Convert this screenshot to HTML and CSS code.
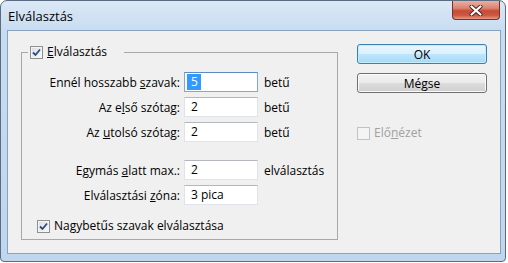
FILE: index.html
```html
<!DOCTYPE html>
<html lang="hu">
<head>
  <meta charset="UTF-8" />
  <title>Elválasztás</title>
  <link rel="stylesheet" href="styles.css">
</head>
<body>
  <div class="window">
    <div class="titlebar">
      <span class="title">Elválasztás</span>
      <span class="close">
        <svg width="14" height="11" viewBox="0 0 14 11">
          <path d="M2.5 1.5 L11.5 9.5 M11.5 1.5 L2.5 9.5" stroke="#4a211c" stroke-width="4" stroke-linecap="round"/>
          <path d="M2.5 1.5 L11.5 9.5 M11.5 1.5 L2.5 9.5" stroke="#fff" stroke-width="2.2" stroke-linecap="round"/>
        </svg>
      </span>
    </div>

    <div class="client">
      <fieldset class="group">
        <legend class="option">
          <span class="check on"><svg width="9" height="9" viewBox="0 0 9 9"><path d="M1 4.5 L3.5 7 L8 1.5" fill="none" stroke="#2b4a86" stroke-width="1.8"/></svg></span>
          <span><u>E</u>lválasztás</span>
        </legend>

        <div class="rows">
          <span class="label">Ennél hosszabb <u>s</u>zavak:</span>
          <span class="field focus"><span class="value sel">5</span></span>
          <span class="unit">betű</span>

          <span class="label">Az e<u>l</u>ső szótag:</span>
          <span class="field"><span class="value">2</span></span>
          <span class="unit">betű</span>

          <span class="label">Az <u>u</u>tolsó szótag:</span>
          <span class="field"><span class="value">2</span></span>
          <span class="unit">betű</span>
        </div>

        <div class="rows second">
          <span class="label">Egymás <u>a</u>latt max.:</span>
          <span class="field"><span class="value">2</span></span>
          <span class="unit">elválasztás</span>

          <span class="label">Elválasztási <u>z</u>óna:</span>
          <span class="field"><span class="value">3 pica</span></span>
          <span class="unit"></span>
        </div>

        <div class="option caps">
          <span class="check on"><svg width="9" height="9" viewBox="0 0 9 9"><path d="M1 4.5 L3.5 7 L8 1.5" fill="none" stroke="#2b4a86" stroke-width="1.8"/></svg></span>
          <span>Na<u>g</u>ybetűs szavak elválasztása</span>
        </div>
      </fieldset>

      <div class="side">
        <button class="btn default">OK</button>
        <button class="btn">Mégse</button>
        <div class="option disabled">
          <span class="check"></span>
          <span>Elő<u>n</u>ézet</span>
        </div>
      </div>
    </div>
  </div>
</body>
</html>
```

FILE: styles.css
```css
body {
  margin: 0;
  background: #fff;
  font-family: 'Open Sans', sans-serif;
  font-size: 12px;
  color: #000;
}
.window {
  width: 506px;
  height: 262px;
  box-sizing: border-box;
  border: 1px solid #5b6c82;
  border-radius: 7px 7px 4px 4px;
  background: linear-gradient(#dbe8f6, #c8dcf1 30px, #c0d6ee);
  padding: 0 4px 7px 6px;
  display: flex;
  flex-direction: column;
}
.titlebar {
  height: 29px;
  display: flex;
  justify-content: space-between;
  padding-left: 1px;
}
.title {
  font-size: 13px;
  line-height: 30px;
}
.close {
  width: 48px;
  height: 19px;
  margin-right: 1px;
  box-sizing: border-box;
  border: 1px solid #7c3027;
  border-top: none;
  border-radius: 0 0 4px 4px;
  background: linear-gradient(#eab0a3, #d98472 40%, #c84a36 55%, #cc5a43 80%, #e59a83);
  display: flex;
  align-items: center;
  justify-content: center;
}
.client {
  flex: 1;
  background: #f0f0f0;
  border: 1px solid #8aa2c1;
  display: flex;
  align-items: flex-start;
  padding: 13px 0 0 13px;
}
.group {
  margin: 0;
  width: 317px;
  box-sizing: border-box;
  border: 1px solid #a8a8a8;
  padding: 0 0 5px 0;
  min-width: 0;
}
.group legend {
  margin-left: 6px;
  padding: 0 17px 0 2px;
}
.option {
  display: flex;
  align-items: center;
  gap: 4px;
  line-height: 16px;
}
.check {
  width: 13px;
  height: 13px;
  box-sizing: border-box;
  border: 1px solid #8f8f8f;
  background: linear-gradient(135deg, #dcdcdc, #fbfbfb);
  box-shadow: inset 0 0 0 1px #f4f4f4;
  display: flex;
  align-items: center;
  justify-content: center;
}
.rows {
  display: grid;
  grid-template-columns: 158px 74px auto;
  grid-auto-rows: 20px;
  column-gap: 4px;
  row-gap: 5px;
  align-items: center;
  margin-top: 12px;
}
.rows .unit {
  padding-left: 2px;
}
.rows.second {
  margin-top: 18px;
}
.label {
  text-align: right;
}
.field {
  height: 20px;
  box-sizing: border-box;
  background: #fff;
  border: 1px solid #e2e3ea;
  border-top-color: #b5b7be;
  padding: 1px 0 0 2px;
  line-height: 16px;
}
.field.focus {
  border-color: #7ea9d6;
  border-top-color: #5b8cc4;
}
.value {
  display: inline-block;
  padding: 0 3px 0 4px;
}
.value.sel {
  background: #3399ff;
  color: #fff;
}
.caps {
  margin: 13px 0 0 15px;
}
.side {
  margin-left: 19px;
  display: flex;
  flex-direction: column;
  width: 130px;
}
.btn {
  height: 20px;
  margin: 0 0 9px 0;
  padding: 0;
  font-family: 'Open Sans', sans-serif;
  font-size: 12px;
  color: #000;
  border: 1px solid #707070;
  border-radius: 3px;
  background: linear-gradient(#f2f2f2, #ebebeb 50%, #dddddd 50%, #cfcfcf);
  box-shadow: inset 0 0 0 1px #fbfbfb;
}
.btn.default {
  border-color: #3c7fb1;
  background: linear-gradient(#eaf6fd, #d9f0fc 50%, #bee6fd 50%, #a7d9f5);
  box-shadow: inset 0 0 0 1px #c3ecfc;
}
.side .disabled {
  margin-top: 23px;
  color: #a0a0a0;
}
.disabled .check {
  border-color: #c2c2c2;
  background: #f4f4f4;
}
```
